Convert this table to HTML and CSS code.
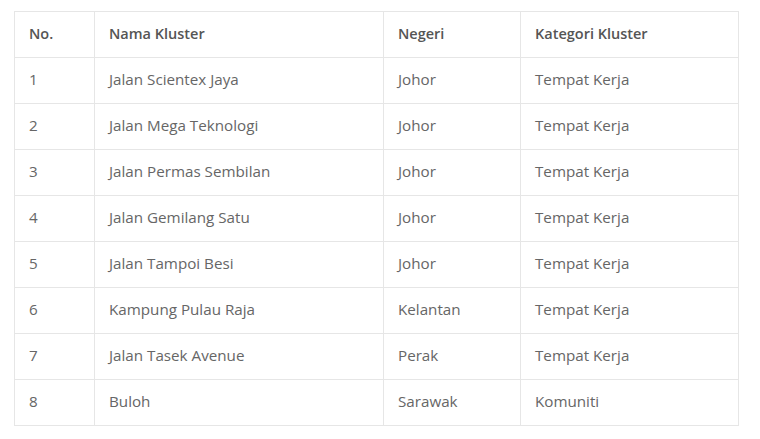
FILE: index.html
```html
<!DOCTYPE html>
<html>
<head>
<meta charset="utf-8">
<link rel="stylesheet" href="styles.css">
</head>
<body>
<table class="tbl">
  <colgroup>
    <col class="c1"><col class="c2"><col class="c3"><col class="c4">
  </colgroup>
  <thead>
    <tr><th>No.</th><th>Nama Kluster</th><th>Negeri</th><th>Kategori Kluster</th></tr>
  </thead>
  <tbody>
    <tr><td>1</td><td>Jalan Scientex Jaya</td><td>Johor</td><td>Tempat Kerja</td></tr>
    <tr><td>2</td><td>Jalan Mega Teknologi</td><td>Johor</td><td>Tempat Kerja</td></tr>
    <tr><td>3</td><td>Jalan Permas Sembilan</td><td>Johor</td><td>Tempat Kerja</td></tr>
    <tr><td>4</td><td>Jalan Gemilang Satu</td><td>Johor</td><td>Tempat Kerja</td></tr>
    <tr><td>5</td><td>Jalan Tampoi Besi</td><td>Johor</td><td>Tempat Kerja</td></tr>
    <tr><td>6</td><td>Kampung Pulau Raja</td><td>Kelantan</td><td>Tempat Kerja</td></tr>
    <tr><td>7</td><td>Jalan Tasek Avenue</td><td>Perak</td><td>Tempat Kerja</td></tr>
    <tr><td>8</td><td>Buloh</td><td>Sarawak</td><td>Komuniti</td></tr>
  </tbody>
</table>
</body>
</html>
```
FILE: styles.css
```css
html, body { margin: 0; padding: 0; background: #fff; }
body { padding: 11px 0 0 14px; font-family: "Open Sans", "DejaVu Sans", sans-serif; }
.tbl {
  border-collapse: collapse;
  table-layout: fixed;
  width: 724px;
  font-size: 15.2px;
  color: #666;
}
.c1 { width: 80px; }
.c2 { width: 289px; }
.c3 { width: 137px; }
.c4 { width: 218px; }
.tbl th, .tbl td {
  border: 1px solid #e6e6e6;
  height: 46px;
  padding: 0 0 2px 14px;
  text-align: left;
  vertical-align: middle;
  box-sizing: border-box;
}
.tbl th { font-weight: 600; color: #555; font-size: 14.5px; }
.tbl td { font-weight: 400; padding-bottom: 4px; }
```
